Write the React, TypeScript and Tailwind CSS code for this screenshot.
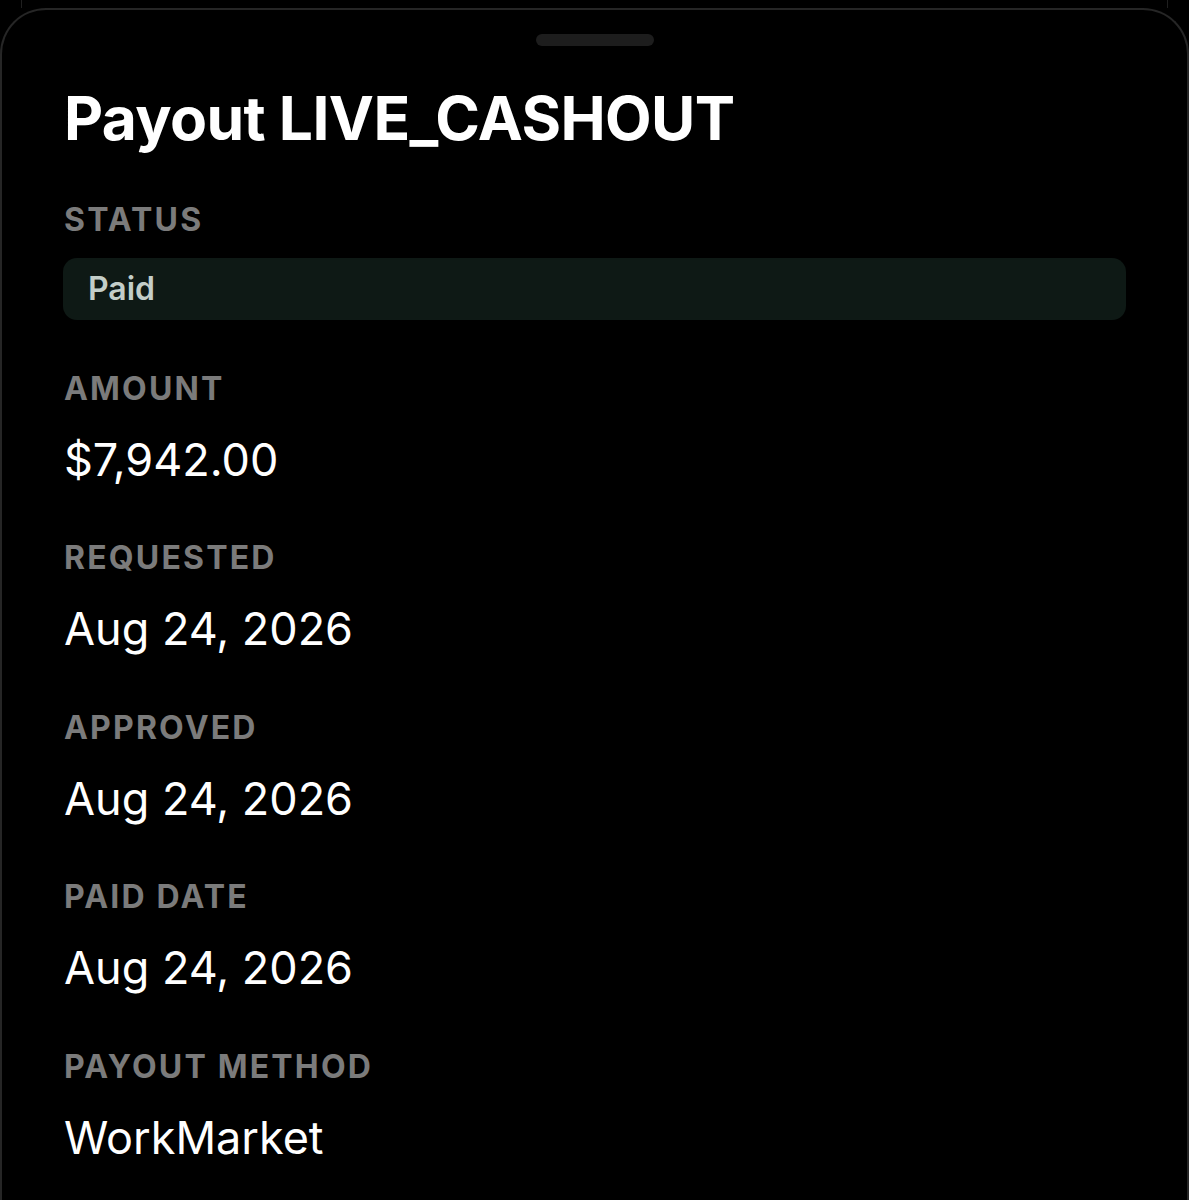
const fields = [
  { label: "AMOUNT", value: "$7,942.00" },
  { label: "REQUESTED", value: "Aug 24, 2026" },
  { label: "APPROVED", value: "Aug 24, 2026" },
  { label: "PAID DATE", value: "Aug 24, 2026" },
  { label: "PAYOUT METHOD", value: "WorkMarket" },
];

function Label({ children }: { children: React.ReactNode }) {
  return (
    <div className="text-[32px] leading-[40px] font-bold tracking-[0.068em] text-[#7b7b7b]">
      {children}
    </div>
  );
}

export default function App() {
  return (
    <div
      className="min-h-[1200px] h-[1200px] overflow-hidden bg-black"
      style={{ fontFamily: 'Inter, "Noto Sans", sans-serif' }}
    >
      {/* card behind the sheet */}
      <div className="mx-[21px] h-[8px] border-x border-[#1f1f1f]" />
      <div className="h-[1192px] rounded-t-[46px] border-2 border-b-0 border-[#262626] bg-black px-[62px]">
        <div className="mx-auto mt-[24px] h-[12px] w-[118px] rounded-full bg-[#1d1d1d]" />
        <h1 className="mt-[37px] text-[60.5px] leading-[70px] font-bold tracking-[-0.01em] text-white">
          Payout LIVE_CASHOUT
        </h1>
        <div className="mt-[47px]">
          <Label>STATUS</Label>
          <div className="-mx-[1px] mt-[18px] flex h-[62px] items-center rounded-[14px] bg-[#0e1915] px-[25px]">
            <span className="text-[32px] font-semibold text-[#c3cec9]">Paid</span>
          </div>
        </div>
        {fields.map((f, i) => (
          <div key={f.label} className={i === 0 ? "mt-[48.5px]" : "mt-[50.5px]"}>
            <Label>{f.label}</Label>
            <div className="mt-[22px] text-[45px] leading-[57px] text-white">{f.value}</div>
          </div>
        ))}
      </div>
    </div>
  );
}
